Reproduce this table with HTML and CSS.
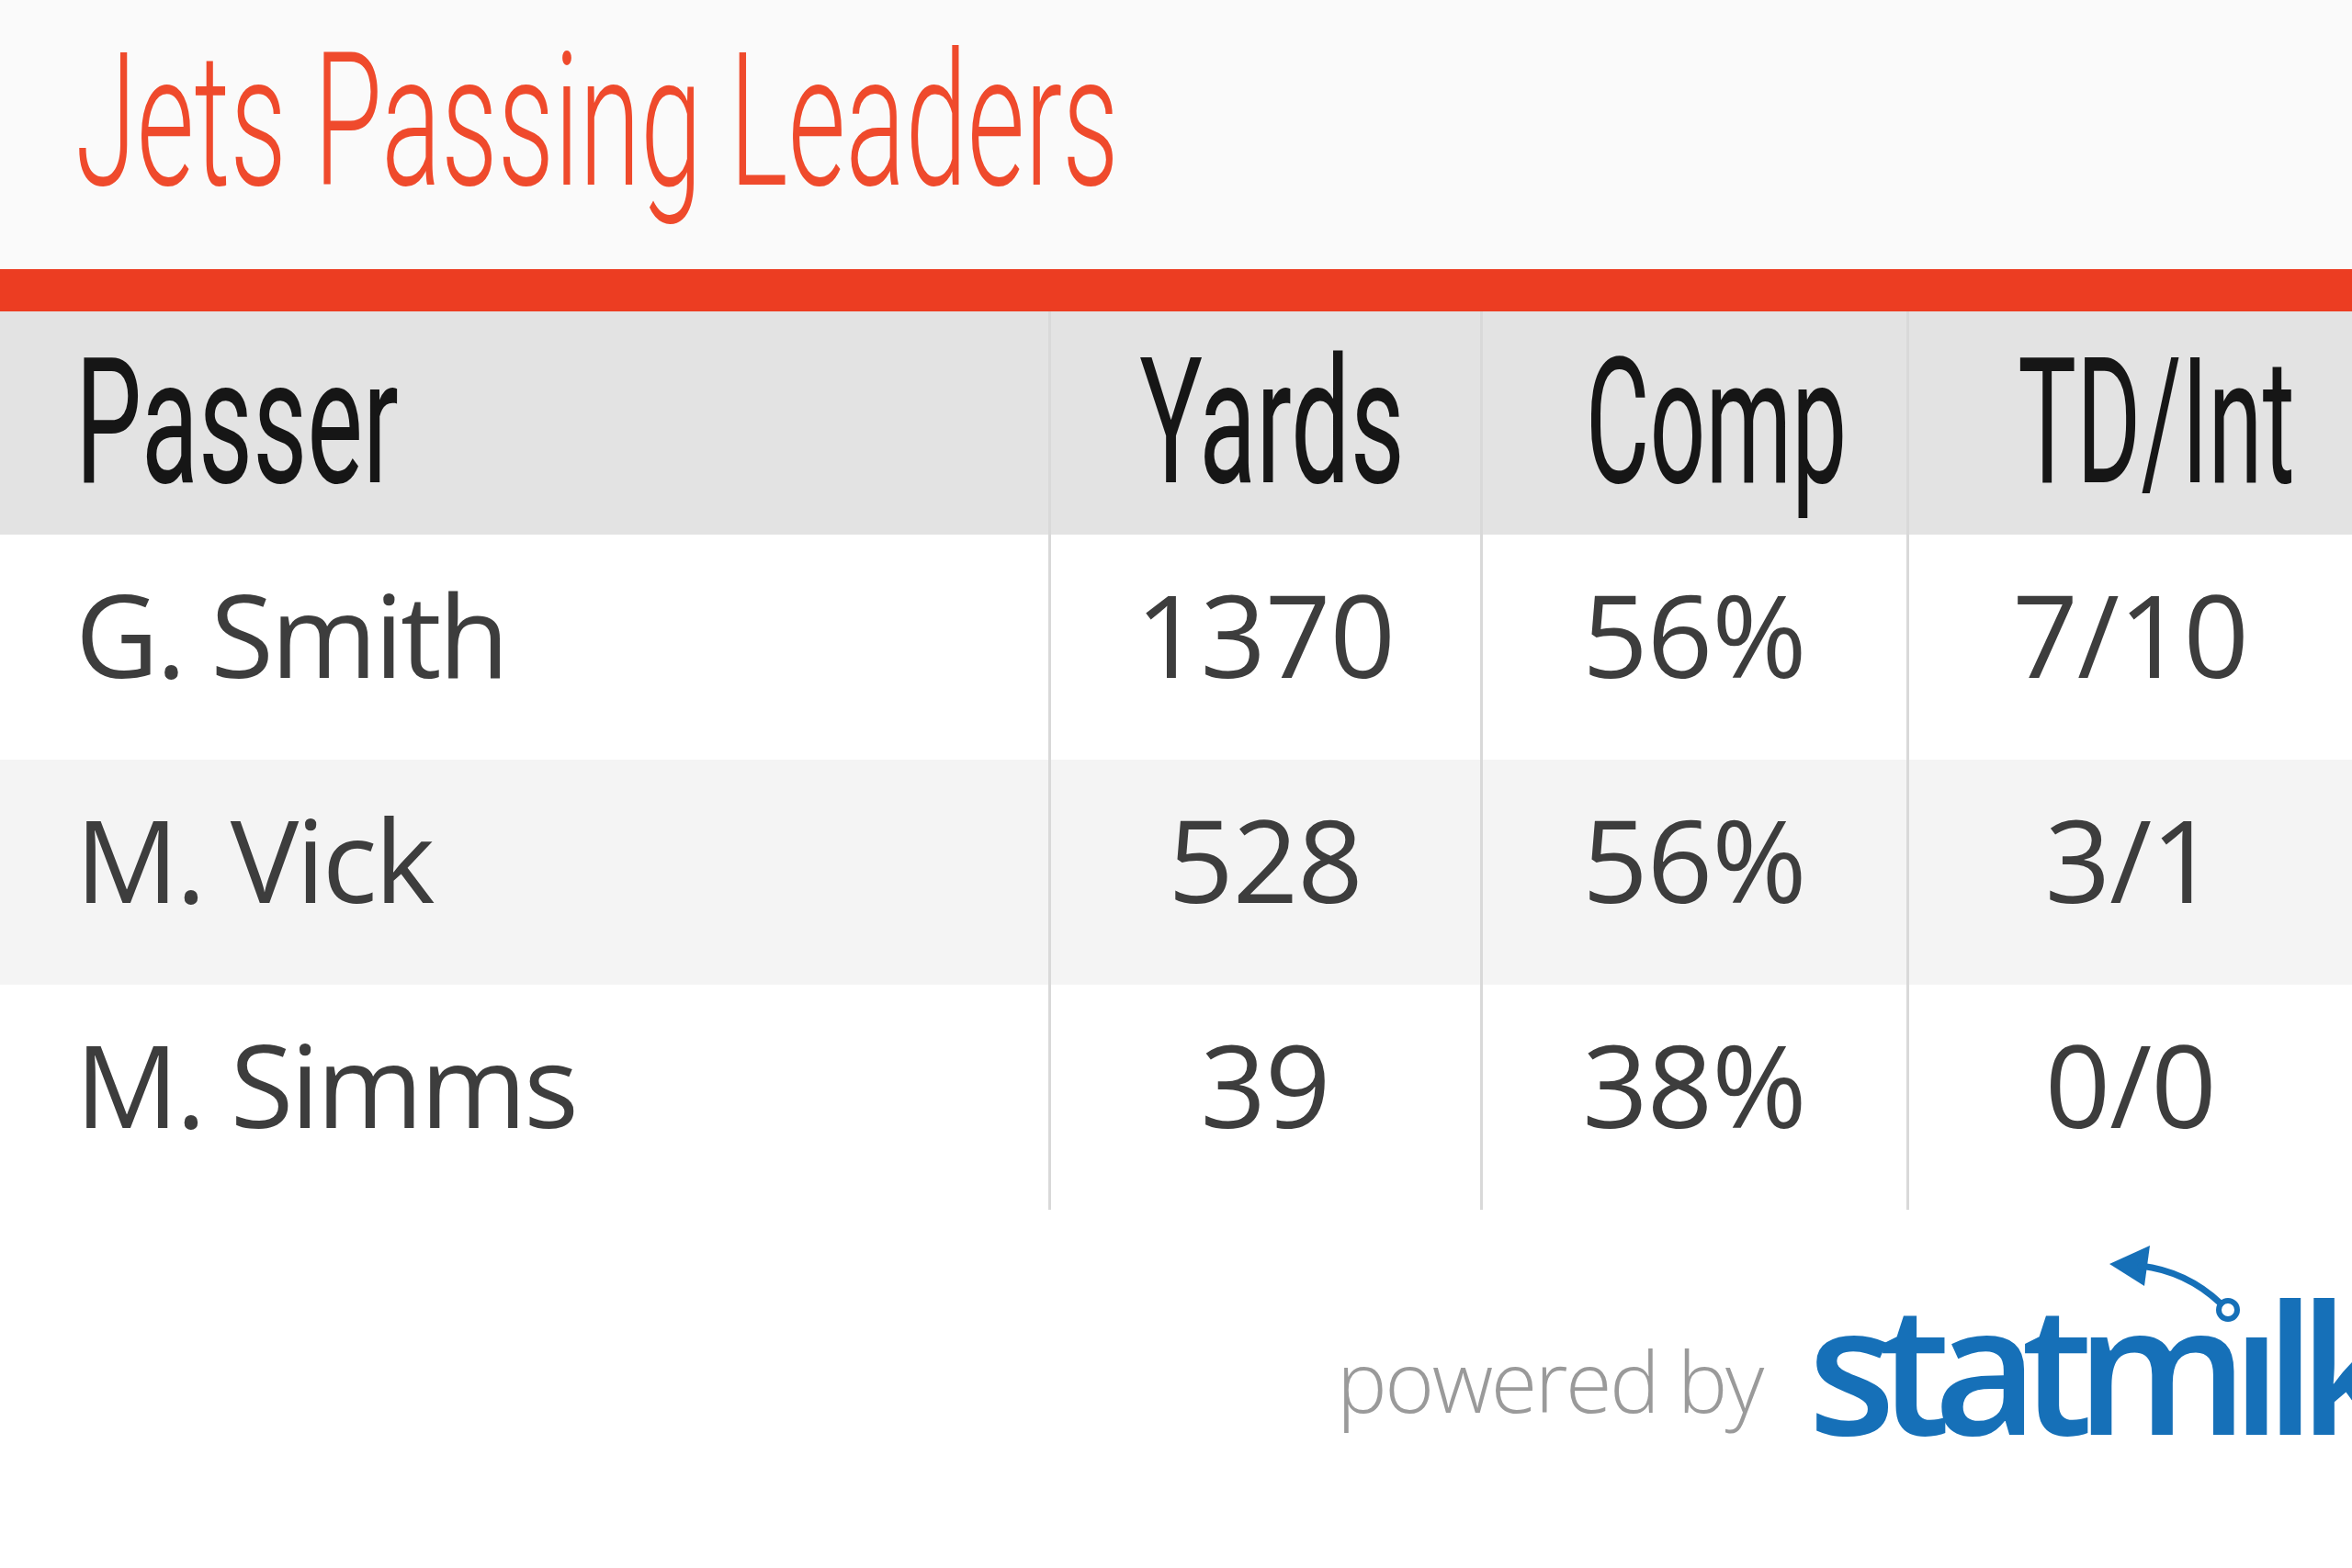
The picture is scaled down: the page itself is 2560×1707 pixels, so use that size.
FILE: index.html
```html
<!DOCTYPE html>
<html lang="en">
<head>
<meta charset="utf-8">
<title>Jets Passing Leaders</title>
<link rel="stylesheet" href="styles.css">
</head>
<body>
<div class="page">
  <header class="title-bar">
    <h1 class="title"><span class="squeeze">Jets Passing Leaders</span></h1>
  </header>
  <div class="rule"></div>
  <table class="stats">
    <colgroup>
      <col class="c-name">
      <col class="c-yds">
      <col class="c-comp">
      <col class="c-td">
    </colgroup>
    <thead>
      <tr>
        <th class="name"><span class="squeeze">Passer</span></th>
        <th class="num"><span class="squeeze mid">Yards</span></th>
        <th class="num"><span class="squeeze mid tight">Comp</span></th>
        <th class="num"><span class="squeeze mid tight">TD/Int</span></th>
      </tr>
    </thead>
    <tbody>
      <tr>
        <td class="name">G. Smith</td>
        <td class="num">1370</td>
        <td class="num">56%</td>
        <td class="num">7/10</td>
      </tr>
      <tr class="alt">
        <td class="name">M. Vick</td>
        <td class="num">528</td>
        <td class="num">56%</td>
        <td class="num">3/1</td>
      </tr>
      <tr>
        <td class="name">M. Simms</td>
        <td class="num">39</td>
        <td class="num">38%</td>
        <td class="num">0/0</td>
      </tr>
    </tbody>
  </table>
  <footer class="credit">
    <span class="powered">powered by</span>
    <span class="logo">statmılk<svg class="logo-mark" viewBox="0 0 160 100" width="160" height="100" aria-hidden="true"><polygon points="8,30 52,10 46,54" fill="#1670b8"/><path d="M42 32 Q 92 38 129 73" fill="none" stroke="#1670b8" stroke-width="7" stroke-linecap="round"/><circle cx="137" cy="80" r="10" fill="none" stroke="#1670b8" stroke-width="6"/></svg></span>
  </footer>
</div>
</body>
</html>
```

FILE: styles.css
```css
html, body {
  margin: 0;
  padding: 0;
  background: #ffffff;
}

.page {
  width: 2560px;
  height: 1707px;
  overflow: hidden;
  background: #ffffff;
}

.title-bar {
  height: 293px;
  box-sizing: border-box;
  padding: 31px 0 0 82px;
  background: #fafafa;
}

.title {
  margin: 0;
  font-family: Roboto, "Liberation Sans", sans-serif;
  font-weight: 300;
  font-size: 202px;
  line-height: 1;
  color: #ef4a2c;
  white-space: nowrap;
}

.squeeze {
  display: inline-block;
  transform: scaleX(0.6);
  transform-origin: 0 50%;
  white-space: nowrap;
}

.squeeze.mid {
  transform-origin: 50% 50%;
}

.squeeze.tight {
  transform: scaleX(0.56);
}

.rule {
  height: 46px;
  background: #ec3d22;
}

.stats {
  width: 2560px;
  border-collapse: collapse;
  table-layout: fixed;
}

.c-name { width: 1142px; }
.c-yds { width: 470px; }
.c-comp { width: 464px; }
.c-td { width: 484px; }

.stats thead tr {
  height: 243px;
}

.stats th {
  background: #e3e3e3;
  font-family: Roboto, "Liberation Sans", sans-serif;
  font-weight: 400;
  font-size: 191px;
  line-height: 1;
  color: #161616;
  padding: 26px 0 0;
  vertical-align: top;
  text-align: center;
  white-space: nowrap;
}

.stats th.name {
  text-align: left;
  padding-left: 82px;
}

.stats tbody tr {
  height: 245px;
}

.stats td {
  font-family: "Open Sans", "Noto Sans", sans-serif;
  font-weight: 400;
  font-size: 125px;
  line-height: 1;
  color: #3d3d3d;
  padding: 45px 0 0;
  vertical-align: top;
  text-align: center;
  white-space: nowrap;
  letter-spacing: -1px;
}

.stats td.name {
  text-align: left;
  padding-left: 82px;
  letter-spacing: -3px;
}

.stats .num {
  border-left: 3px solid #d9d9d9;
}

.stats tr.alt td {
  background: #f4f4f4;
}

.credit {
  display: flex;
  align-items: flex-end;
  padding: 71px 0 0 1455px;
}

.powered {
  font-family: "Open Sans", "Noto Sans", sans-serif;
  font-weight: 300;
  font-size: 92px;
  line-height: 1;
  letter-spacing: -2.5px;
  color: #9a9a9a;
  margin: 0 50px 35px 0;
  white-space: nowrap;
}

.logo {
  position: relative;
  font-family: "Open Sans", "Noto Sans", sans-serif;
  font-weight: 600;
  font-size: 196px;
  line-height: 1;
  letter-spacing: -18px;
  color: #1670b8;
  white-space: nowrap;
}

.logo-mark {
  position: absolute;
  left: 320px;
  top: -42px;
}
```
